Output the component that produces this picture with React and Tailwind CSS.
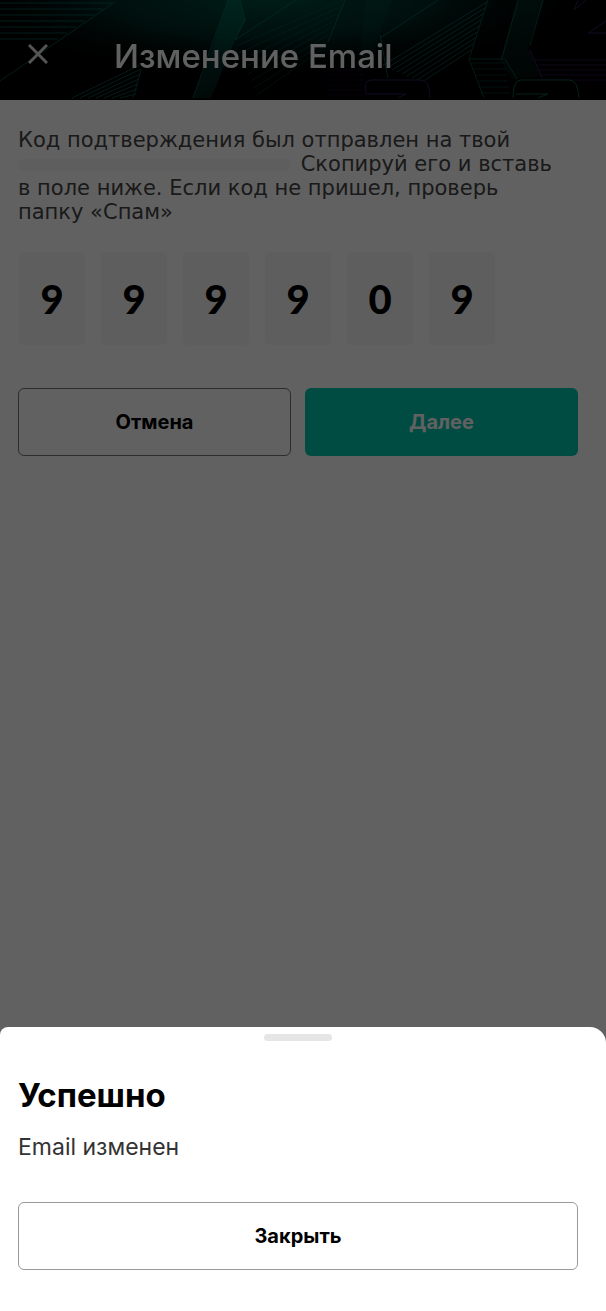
import React, { useState } from 'react';

const range = (n) => Array.from({ length: n }, (_, i) => i);

const HeaderArt = () => (
    <svg className="absolute inset-0 h-full w-full" viewBox="0 0 606 100" preserveAspectRatio="none" fill="none" aria-hidden="true">
        <defs>
            <radialGradient id="glow" gradientUnits="userSpaceOnUse" cx="0" cy="0" r="1" gradientTransform="translate(270 -5) scale(330 85)">
                <stop offset="0" stopColor="#005545" stopOpacity="0.95" />
                <stop offset="0.5" stopColor="#003a31" stopOpacity="0.7" />
                <stop offset="1" stopColor="#000" stopOpacity="0" />
            </radialGradient>
            <linearGradient id="beam" x1="0" y1="0" x2="0" y2="1">
                <stop offset="0" stopColor="#007a66" stopOpacity="0.5" />
                <stop offset="1" stopColor="#004a3e" stopOpacity="0.4" />
            </linearGradient>
        </defs>
        <rect width="606" height="100" fill="#000" />
        <rect width="606" height="100" fill="url(#glow)" />
        <path d="M228 0h12l5 20-10 20-24 58h-18l20-52z" fill="url(#beam)" />
        <path d="M366 0h26l-22 60-12 10z" fill="url(#beam)" opacity="0.3" />
        <path d="M518 0h26l-16 48 12 28-28 4-12-20z" fill="url(#beam)" opacity="0.5" />
        <g stroke="#0f8070" opacity="0.6">
            {range(7).map(i => <path key={i} d={`M0 ${3 + i * 6}H${112 - i * 9}`} />)}
            <path d="M0 81 115 2" />
            {range(7).map(i => <path key={i} d={`M${72 + i * 8} 98 ${142 - i} ${64 + i * 5}`} />)}
            <path d="M141 70 133 98M193 98 228 0M240 0 245 20 235 40 296 0" />
            {range(8).map(i => <path key={i} d={`M${236 + i * 3} ${46 + i * 7} ${343 - i * 3} ${i * 7}`} opacity="0.5" />)}
            <path d="M345 0 328 42M380 38 438 0M380 35 388 78" />
            {range(9).map(i => <path key={i} d={`M${382 + i * 5} ${66 + i * 2} ${487 - i * 2} ${2 + i * 6}`} />)}
        </g>
        <g stroke="#0c8a70" opacity="0.5">
            <path d="M488 0 469 59 484 98M518 0 502 58M469 59h36l12 20M543 0 530 46" />
            {range(6).map(i => <path key={i} d={`M${471 + i * 2} ${63 + i * 6}H${505 + i}`} opacity="0.7" />)}
        </g>
        <g stroke="#4c2a86" opacity="0.7">
            <path d="M530 50 542 78M574 10l12-10M574 10l4-10M588 33l18-12M588 33h18" />
            {range(5).map(i => <path key={i} d={`M${534 + i * 2} ${60 + i * 5}H606`} opacity="0.6" />)}
            {range(6).map(i => <path key={i} d={`M328 ${70 + i * 5}h36`} opacity="0.4" />)}
        </g>
        <path d="M366 94q-3-14 5-14h50q9 0 9 18M366 94h40l-8 4" fill="#000" stroke="#2c2260" />
        <path d="M513 98q0-18 8-18h48q9 0 10 18M516 94h32l-10 4" fill="#000" stroke="#0c5a4e" />
    </svg>
);

const App = () => {
    const [code, setCode] = useState(['9', '9', '9', '9', '0', '9']);
    const [open, setOpen] = useState(true);

    const handleDigit = (index, value) => {
        setCode(code.map((d, i) => (i === index ? value.slice(-1) : d)));
    };

    return (
        <div className="relative flex min-h-screen flex-col bg-white font-['Inter',sans-serif] text-black">
            <header className="relative flex h-[100px] items-center overflow-hidden bg-black pt-3 pl-7">
                <HeaderArt />
                <button type="button" aria-label="Назад" className="relative flex w-[86px] pb-1 text-[#ddd]">
                    <svg width="20" height="20" viewBox="0 0 20 20" fill="none" stroke="currentColor" strokeWidth="3">
                        <path d="M1 1 19 19M19 1 1 19" />
                    </svg>
                </button>
                <h1 className="relative text-[33px] leading-10 font-medium text-white">Изменение Email</h1>
            </header>

            <main className="pt-7 pr-7 pl-[18px]">
                <p className="font-['DejaVu_Sans',sans-serif] text-[21px] leading-6 text-[#444]">
                    Код подтверждения был отправлен на твой<br />
                    <span className="mr-1 inline-block h-3 w-[272px] rounded-sm bg-[#f7f7f7]" />
                    {' '}Скопируй его и вставь<br />
                    в поле ниже. Если код не пришел, проверь<br />
                    папку «Спам»
                </p>

                <div className="mt-7 flex gap-4 pl-px">
                    {code.map((digit, i) => (
                        <input key={i} value={digit} onChange={e => handleDigit(i, e.target.value)}
                            inputMode="numeric" aria-label={`Цифра ${i + 1}`}
                            className="h-[93px] w-[66px] rounded-md bg-[#f6f6f6] text-center font-['Lato',sans-serif] text-[40px] font-black" />
                    ))}
                </div>

                <div className="mt-[43px] grid grid-cols-2 gap-[14px]">
                    <button type="button" className="h-[68px] rounded-md border border-[#777] text-xl font-bold">Отмена</button>
                    <button type="button" className="h-[68px] rounded-md bg-[#00c6ae] text-xl font-bold text-white">Далее</button>
                </div>
            </main>

            {open && (
                <div className="fixed inset-0 flex flex-col justify-end bg-black/62">
                    <section role="dialog" aria-labelledby="sheet-title" className="flex flex-col rounded-tl-lg rounded-tr-2xl bg-white pt-[7px] pr-7 pb-[41px] pl-[18px]">
                        <div className="h-[7px] w-[68px] self-center rounded-sm bg-[#e6e6e6]" />
                        <h2 id="sheet-title" className="mt-[34px] text-[33px] leading-10 font-bold">Успешно</h2>
                        <p className="mt-4 text-[23px] leading-8 text-[#333]">Email изменен</p>
                        <button type="button" onClick={() => setOpen(false)}
                            className="mt-[39px] h-[68px] rounded-md border border-[#999] text-xl font-bold">
                            Закрыть
                        </button>
                    </section>
                </div>
            )}
        </div>
    );
};

export default App;
